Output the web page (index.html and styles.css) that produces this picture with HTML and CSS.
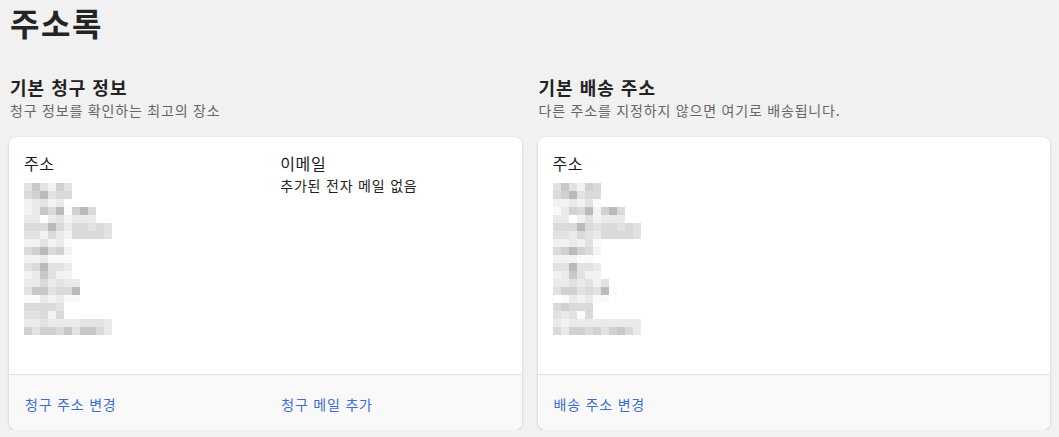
FILE: index.html
```html
<!DOCTYPE html>
<html lang="ko">
<head>
<meta charset="utf-8">
<title>주소록</title>
<link rel="stylesheet" href="styles.css">
</head>
<body>
<div class="page">
  <h1 class="title">주소록</h1>
  <div class="columns">
    <section class="section">
      <h2 class="sec-title">기본 청구 정보</h2>
      <p class="sec-sub">청구 정보를 확인하는 최고의 장소</p>
      <div class="card">
        <div class="card-body">
          <div class="half">
            <h3 class="label">주소</h3>
            <div class="mosaic">
              <div class="r"><span class="s3"></span><span class="s6"></span><span class="s3"></span><span class="s1"></span><span class="s5"></span><span class="s3"></span></div>
              <div class="r"><span class="s4"></span><span class="s5"></span><span class="s7"></span><span class="s3"></span><span class="s4"></span><span class="s4"></span></div>
              <div class="r"><span class="s1"></span><span class="s2"></span><span class="s3"></span><span class="s1"></span><span class="s2"></span></div>
              <div class="r"><span class="s1"></span><span class="s2"></span><span class="s6"></span><span class="s4"></span><span class="s7"></span><span class="s0"></span><span class="s5"></span><span class="s7"></span><span class="s4"></span></div>
              <div class="r"><span class="s2"></span><span class="s2"></span><span class="w"></span><span class="s2"></span><span class="s3"></span><span class="s1"></span><span class="s2"></span><span class="s2"></span><span class="s2"></span></div>
              <div class="r"><span class="s4"></span><span class="s4"></span><span class="s4"></span><span class="s7"></span><span class="s4"></span><span class="s2"></span><span class="s4"></span><span class="s4"></span><span class="s3"></span><span class="s4"></span><span class="s3"></span></div>
              <div class="r"><span class="s3"></span><span class="s3"></span><span class="s1"></span><span class="s4"></span><span class="s2"></span><span class="s1"></span><span class="s4"></span><span class="s4"></span><span class="s4"></span><span class="s4"></span><span class="s3"></span></div>
              <div class="r"><span class="s1"></span><span class="s1"></span><span class="s3"></span><span class="s1"></span><span class="s2"></span><span class="s0"></span></div>
              <div class="r"><span class="s4"></span><span class="s5"></span><span class="s7"></span><span class="s4"></span><span class="s5"></span><span class="s1"></span></div>
              <div class="r"><span class="s1"></span><span class="s1"></span><span class="s2"></span><span class="s0"></span><span class="s0"></span><span class="s0"></span></div>
              <div class="r"><span class="s3"></span><span class="s4"></span><span class="s7"></span><span class="s3"></span><span class="s3"></span><span class="s2"></span></div>
              <div class="r"><span class="s1"></span><span class="s2"></span><span class="s6"></span><span class="s3"></span><span class="s1"></span><span class="s1"></span></div>
              <div class="r"><span class="s2"></span><span class="s2"></span><span class="s4"></span><span class="s2"></span><span class="s3"></span><span class="s2"></span><span class="s2"></span></div>
              <div class="r"><span class="s3"></span><span class="s6"></span><span class="s6"></span><span class="s3"></span><span class="s4"></span><span class="s4"></span><span class="s7"></span></div>
              <div class="r"><span class="s0"></span><span class="s0"></span><span class="s2"></span><span class="s1"></span><span class="s2"></span><span class="s0"></span><span class="s0"></span></div>
              <div class="r"><span class="s4"></span><span class="s4"></span><span class="s4"></span><span class="s4"></span><span class="s3"></span></div>
              <div class="r"><span class="s3"></span><span class="s3"></span><span class="s4"></span><span class="s1"></span><span class="s4"></span></div>
              <div class="r"><span class="s2"></span><span class="s2"></span><span class="s3"></span><span class="s2"></span><span class="s2"></span><span class="s2"></span><span class="s2"></span><span class="s3"></span><span class="s3"></span><span class="s3"></span><span class="s2"></span></div>
              <div class="r"><span class="s5"></span><span class="s3"></span><span class="s5"></span><span class="s5"></span><span class="s4"></span><span class="s6"></span><span class="s3"></span><span class="s6"></span><span class="s6"></span><span class="s4"></span><span class="s2"></span></div>
            </div>
          </div>
          <div class="half">
            <h3 class="label">이메일</h3>
            <p class="text">추가된 전자 메일 없음</p>
          </div>
        </div>
        <div class="card-foot">
          <div class="half"><a class="link" href="#">청구 주소 변경</a></div>
          <div class="half"><a class="link" href="#">청구 메일 추가</a></div>
        </div>
      </div>
    </section>
    <section class="section">
      <h2 class="sec-title">기본 배송 주소</h2>
      <p class="sec-sub">다른 주소를 지정하지 않으면 여기로 배송됩니다.</p>
      <div class="card">
        <div class="card-body">
          <div class="half">
            <h3 class="label">주소</h3>
            <div class="mosaic">
              <div class="r"><span class="s3"></span><span class="s6"></span><span class="s3"></span><span class="s1"></span><span class="s5"></span><span class="s4"></span></div>
              <div class="r"><span class="s4"></span><span class="s5"></span><span class="s7"></span><span class="s3"></span><span class="s4"></span><span class="s4"></span></div>
              <div class="r"><span class="s1"></span><span class="s1"></span><span class="s2"></span><span class="s1"></span><span class="s3"></span><span class="s0"></span></div>
              <div class="r"><span class="s0"></span><span class="s2"></span><span class="s5"></span><span class="s4"></span><span class="s7"></span><span class="s1"></span><span class="s5"></span><span class="s7"></span><span class="s4"></span></div>
              <div class="r"><span class="s2"></span><span class="s2"></span><span class="w"></span><span class="s1"></span><span class="s3"></span><span class="s1"></span><span class="s2"></span><span class="s2"></span><span class="s2"></span></div>
              <div class="r"><span class="s4"></span><span class="s4"></span><span class="s4"></span><span class="s7"></span><span class="s4"></span><span class="s3"></span><span class="s4"></span><span class="s4"></span><span class="s3"></span><span class="s4"></span><span class="s3"></span></div>
              <div class="r"><span class="s3"></span><span class="s3"></span><span class="s2"></span><span class="s4"></span><span class="s3"></span><span class="s2"></span><span class="s4"></span><span class="s4"></span><span class="s4"></span><span class="s4"></span><span class="s3"></span></div>
              <div class="r"><span class="s1"></span><span class="s1"></span><span class="s2"></span><span class="s1"></span><span class="s3"></span><span class="s0"></span></div>
              <div class="r"><span class="s4"></span><span class="s5"></span><span class="s7"></span><span class="s5"></span><span class="s4"></span><span class="s1"></span></div>
              <div class="r"><span class="s1"></span><span class="s1"></span><span class="s1"></span><span class="s0"></span><span class="s0"></span><span class="w"></span></div>
              <div class="r"><span class="s3"></span><span class="s3"></span><span class="s7"></span><span class="s3"></span><span class="s3"></span><span class="s2"></span></div>
              <div class="r"><span class="s1"></span><span class="s2"></span><span class="s6"></span><span class="s3"></span><span class="s1"></span><span class="s1"></span></div>
              <div class="r"><span class="s2"></span><span class="s2"></span><span class="s3"></span><span class="s2"></span><span class="s3"></span><span class="s1"></span><span class="s3"></span></div>
              <div class="r"><span class="s3"></span><span class="s5"></span><span class="s5"></span><span class="s3"></span><span class="s4"></span><span class="s3"></span><span class="s7"></span><span class="s0"></span></div>
              <div class="r"><span class="w"></span><span class="s0"></span><span class="s2"></span><span class="s1"></span><span class="s2"></span><span class="s0"></span><span class="s0"></span></div>
              <div class="r"><span class="s4"></span><span class="s5"></span><span class="s4"></span><span class="s4"></span><span class="s4"></span></div>
              <div class="r"><span class="s3"></span><span class="s2"></span><span class="s3"></span><span class="s0"></span><span class="s4"></span></div>
              <div class="r"><span class="s2"></span><span class="s1"></span><span class="s2"></span><span class="s2"></span><span class="s2"></span><span class="s2"></span><span class="s2"></span><span class="s2"></span><span class="s2"></span><span class="s2"></span><span class="s2"></span></div>
              <div class="r"><span class="s4"></span><span class="s2"></span><span class="s5"></span><span class="s5"></span><span class="s4"></span><span class="s5"></span><span class="s3"></span><span class="s5"></span><span class="s6"></span><span class="s4"></span><span class="s2"></span></div>
            </div>
          </div>
        </div>
        <div class="card-foot">
          <div class="half"><a class="link" href="#">배송 주소 변경</a></div>
        </div>
      </div>
    </section>
  </div>
</div>
</body>
</html>
```

FILE: styles.css
```css
* { box-sizing: border-box; }
html, body {
  margin: 0;
  padding: 0;
  background: #f1f1f1;
  font-family: "Noto Sans CJK KR", "Noto Sans", sans-serif;
  color: #202020;
}
.page {
  padding: 0 9px;
}
.title {
  margin: 0;
  font-size: 32px;
  line-height: 44px;
  font-weight: 700;
  color: #242424;
  letter-spacing: 1.5px;
  padding-left: 1px;
}
.columns {
  display: grid;
  grid-template-columns: 1fr 1fr;
  column-gap: 16px;
  margin-top: 31px;
}
.sec-title {
  margin: 0;
  font-size: 18px;
  line-height: 24px;
  font-weight: 700;
  color: #222;
  letter-spacing: 1px;
  padding-left: 1px;
}
.sec-sub {
  margin: 0;
  font-size: 14px;
  line-height: 22px;
  color: #666;
  letter-spacing: 0.8px;
  padding-left: 1px;
}
.card {
  margin-top: 16px;
  background: #fff;
  border-radius: 8px;
  box-shadow: 0 1px 3px rgba(0,0,0,0.18);
  overflow: hidden;
  display: flex;
  flex-direction: column;
  height: 293px;
}
.card-body {
  flex: 1;
  display: flex;
  border-bottom: 1px solid #e1e1e1;
}
.half {
  width: 50%;
  padding: 13px 15px;
}
.label {
  margin: 0;
  font-size: 16px;
  line-height: 26px;
  font-weight: 400;
  color: #1a1a1a;
  letter-spacing: 0.6px;
}
.text {
  margin: 0;
  font-size: 14px;
  line-height: 18px;
  color: #222;
  letter-spacing: 0.8px;
}
.mosaic {
  margin-top: 7px;
}
.r {
  display: flex;
  height: 8px;
}
.r span {
  width: 8px;
  height: 8px;
}
.s0 { background: #fafafa; }
.s1 { background: #f2f2f3; }
.s2 { background: #eaeaea; }
.s3 { background: #e2e2e2; }
.s4 { background: #dadada; }
.s5 { background: #d2d1d2; }
.s6 { background: #c8c8c9; }
.s7 { background: #bbb9ba; }
.w { background: #fff; }
.card-foot {
  height: 55px;
  background: #f9f9f9;
  display: flex;
  align-items: center;
}
.card-foot .half {
  padding: 0 16px;
}
.link {
  font-size: 14px;
  line-height: 20px;
  color: #3d6dcf;
  letter-spacing: 0.8px;
  text-decoration: none;
}
```
